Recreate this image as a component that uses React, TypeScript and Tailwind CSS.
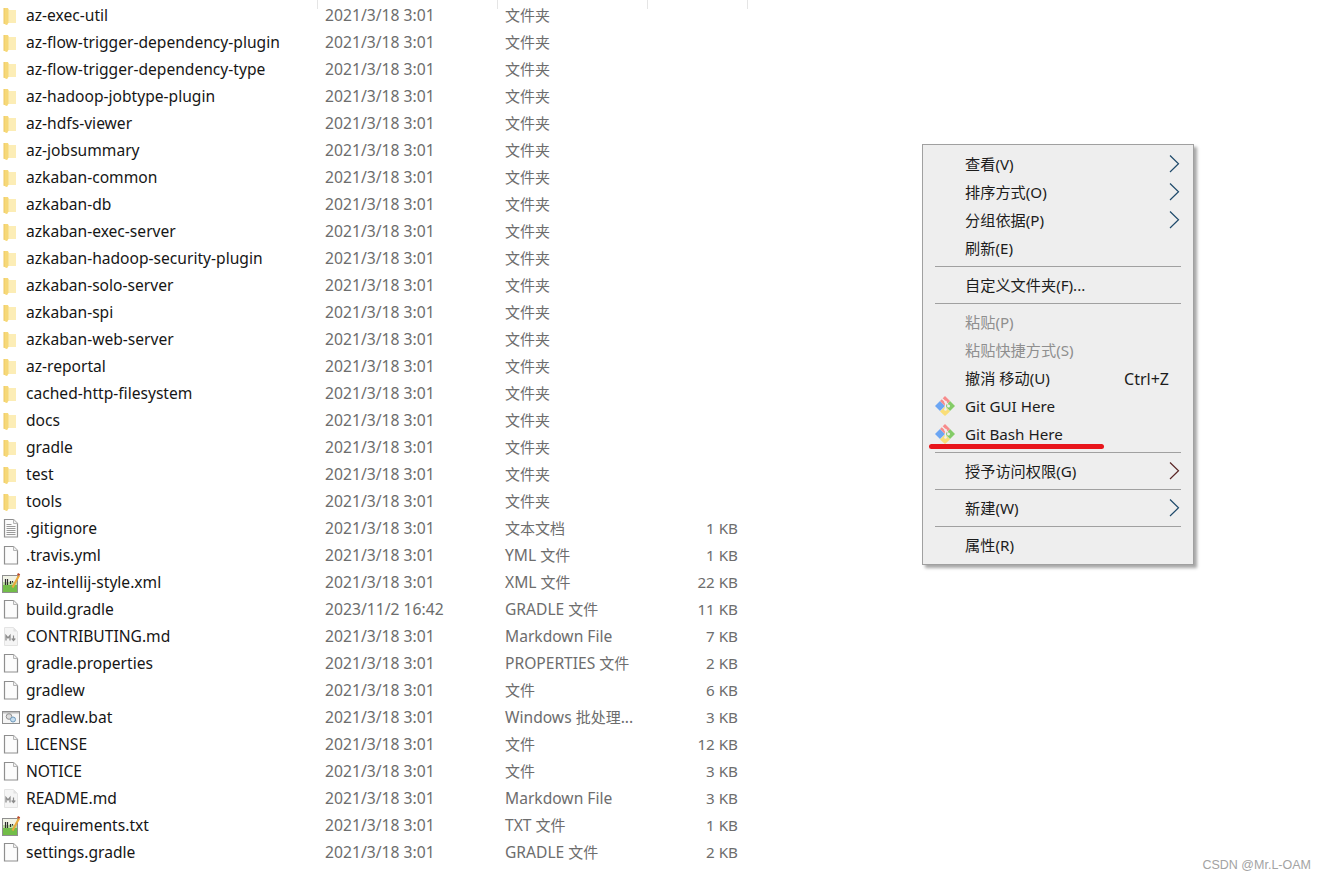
import React from 'react';

type Kind = 'folder' | 'text' | 'blank' | 'xml' | 'md' | 'bat';

type Row = { name: string; date?: string; type: string; size?: string; icon: Kind };

const folders = [
  'az-exec-util',
  'az-flow-trigger-dependency-plugin',
  'az-flow-trigger-dependency-type',
  'az-hadoop-jobtype-plugin',
  'az-hdfs-viewer',
  'az-jobsummary',
  'azkaban-common',
  'azkaban-db',
  'azkaban-exec-server',
  'azkaban-hadoop-security-plugin',
  'azkaban-solo-server',
  'azkaban-spi',
  'azkaban-web-server',
  'az-reportal',
  'cached-http-filesystem',
  'docs',
  'gradle',
  'test',
  'tools',
];

const rows: Row[] = [
  ...folders.map((name): Row => ({ name, type: '文件夹', icon: 'folder' })),
  { name: '.gitignore', type: '文本文档', size: '1 KB', icon: 'text' },
  { name: '.travis.yml', type: 'YML 文件', size: '1 KB', icon: 'blank' },
  { name: 'az-intellij-style.xml', type: 'XML 文件', size: '22 KB', icon: 'xml' },
  { name: 'build.gradle', date: '2023/11/2 16:42', type: 'GRADLE 文件', size: '11 KB', icon: 'blank' },
  { name: 'CONTRIBUTING.md', type: 'Markdown File', size: '7 KB', icon: 'md' },
  { name: 'gradle.properties', type: 'PROPERTIES 文件', size: '2 KB', icon: 'blank' },
  { name: 'gradlew', type: '文件', size: '6 KB', icon: 'blank' },
  { name: 'gradlew.bat', type: 'Windows 批处理...', size: '3 KB', icon: 'bat' },
  { name: 'LICENSE', type: '文件', size: '12 KB', icon: 'blank' },
  { name: 'NOTICE', type: '文件', size: '3 KB', icon: 'blank' },
  { name: 'README.md', type: 'Markdown File', size: '3 KB', icon: 'md' },
  { name: 'requirements.txt', type: 'TXT 文件', size: '1 KB', icon: 'xml' },
  { name: 'settings.gradle', type: 'GRADLE 文件', size: '2 KB', icon: 'blank' },
];

// Latin runs are a little bigger than the CJK ones in the original
const Mixed = ({ text, cjk }: { text: string; cjk: string }) => (
  <>
    {text.split(/([\u4e00-\u9fff]+)/).map((part, i) =>
      i % 2 === 1 ? (
        <span key={i} className={cjk}>
          {part}
        </span>
      ) : (
        part
      ),
    )}
  </>
);

const FileIcon = ({ kind }: { kind: Kind }) => {
  if (kind === 'folder') {
    return (
      <svg width="22" height="22" viewBox="0 0 22 22">
        <path d="M4 3h4l1 2h7v13H8.500L7 20l-3-1.200z" fill="#fbe9a6" />
        <path d="M9 5h7v13H9z" fill="#fcedb6" />
        <path d="M4 3h3.800l.5 1.500V17.500L7 20l-3-1.200z" fill="#f6d878" />
        <path d="M4 3v15.800" stroke="#eec860" strokeWidth="1" />
      </svg>
    );
  }
  if (kind === 'xml') {
    return (
      <svg width="22" height="22" viewBox="0 0 22 22">
        <rect x="2.500" y="3.500" width="15" height="17" fill="#f1f3e6" stroke="#8f8f8f" />
        <rect x="3" y="13" width="14" height="7" fill="#72bd48" />
        <rect x="3" y="10" width="14" height="3" fill="#bcdca0" />
        <path d="M5.500 7v6M7.500 7v6M10.500 9v3M12.500 9v1.500" stroke="#2d2d2d" strokeWidth="1.200" />
        <path d="M12.500 15.500L19 3.500" stroke="#e9a93c" strokeWidth="2.200" />
        <path d="M18 1l2.200 1.200-1 1.800-2.200-1.200z" fill="#b9492c" />
      </svg>
    );
  }
  if (kind === 'bat') {
    return (
      <svg width="22" height="22" viewBox="0 0 22 22">
        <rect x="2.500" y="4.500" width="17" height="12" fill="#f5f5f5" stroke="#8e8e8e" />
        <rect x="3" y="5" width="16" height="1.500" fill="#bdbdbd" />
        <circle cx="9" cy="9.500" r="2.800" fill="#dcdcdc" stroke="#8f8f8f" />
        <circle cx="13" cy="12.500" r="2.500" fill="#c4dcef" stroke="#6f9abb" />
      </svg>
    );
  }
  if (kind === 'md') {
    return (
      <svg width="22" height="22" viewBox="0 0 22 22">
        <path d="M4.500 1.500h9l4 4v14h-13z" fill="#f5f5f5" stroke="#e4e4e4" />
        <path d="M13.500 1.500v4h4z" fill="#e2e2e2" />
        <path d="M6 14.500v-5l2 2.500 2-2.500v5" fill="none" stroke="#8c8c8c" strokeWidth="1.300" />
        <path d="M13.500 9.500v5M11.700 12.500l1.800 2 1.800-2" fill="none" stroke="#8c8c8c" strokeWidth="1.200" />
      </svg>
    );
  }
  return (
    <svg width="22" height="22" viewBox="0 0 22 22">
      <path d="M4.500 1.500h9l4 4v13.500h-13z" fill="#fcfcfc" stroke="#8f8f8f" strokeWidth="1.200" />
      <path d="M13.500 1.500v4h4" fill="#f0f0f0" stroke="#b5b5b5" />
      {kind === 'text' && (
        <path d="M6.500 6.500h5M6.500 8.500h9M6.500 10.500h9M6.500 12.500h9M6.500 14.500h9M6.500 16.500h9" stroke="#9a9a9a" strokeWidth="1" />
      )}
    </svg>
  );
};

const GitIcon = () => (
  <svg width="20" height="20" viewBox="0 0 20 20" className="block">
    <path d="M5 5l5 5-5 5-5-5z" fill="#6ca6f3" />
    <path d="M15 5l5 5-5 5-5-5z" fill="#84cc67" />
    <path d="M10 10.500l5 5-5 4.500-5-4.500z" fill="#f9de78" />
    <path d="M10 0l5 5-5 5-5-5z" fill="#f78b8b" />
    <path d="M7 2.500l6 6M10.500 6v8" stroke="#efefef" strokeWidth="1.300" />
    <circle cx="10.500" cy="6" r="1.300" fill="#efefef" />
    <circle cx="13.500" cy="10" r="1.500" fill="#efefef" />
    <circle cx="10.500" cy="13.500" r="1.300" fill="#efefef" />
  </svg>
);

const Chevron = ({ dark }: { dark?: boolean }) => (
  <svg width="12" height="18" viewBox="0 0 12 18" className="absolute left-[246px] top-[5px]">
    <path d="M1 0.500L9.500 8.800 1 17" fill="none" stroke={dark ? '#5a2626' : '#1f4a6b'} strokeWidth="1.200" />
  </svg>
);

const Sep = () => <div className="h-px bg-[#a0a0a0] mx-[12px] my-[4px]" />;

const Item = ({
  children,
  disabled,
  arrow,
  shortcut,
  git,
  underline,
}: {
  children: React.ReactNode;
  disabled?: boolean;
  arrow?: 'blue' | 'dark';
  shortcut?: string;
  git?: boolean;
  underline?: boolean;
}) => (
  <div className={`relative h-[28px] pl-[42px] flex items-center ${disabled ? 'text-[#8f8f8f]' : 'text-[#1c1c1c]'}`}>
    {git && (
      <span className="absolute left-[12px] top-[4px]">
        <GitIcon />
      </span>
    )}
    <span className="pt-[2px]">{children}</span>
    {shortcut && <span className="absolute right-[24px] pt-[2px] text-[16px]">{shortcut}</span>}
    {arrow && <Chevron dark={arrow === 'dark'} />}
    {underline && <div className="absolute left-[6px] top-[24px] h-[5px] w-[175px] rounded-full bg-[#e8151b]" />}
  </div>
);

export default function App() {
  return (
    <div className="relative w-[1326px] h-[880px] overflow-hidden bg-white font-['Noto_Sans','Noto_Sans_CJK_SC',sans-serif]">
      {/* column header stubs */}
      <div className="flex h-[9px] -mb-[9px]">
        <div className="w-[318px] h-full border-r border-[#e5e5e5]" />
        <div className="w-[180px] h-full border-r border-[#e5e5e5]" />
        <div className="w-[150px] h-full border-r border-[#e5e5e5]" />
        <div className="w-[100px] h-full border-r border-[#e5e5e5]" />
      </div>

      <div className="pt-[2px]">
        {rows.map((r) => (
          <div key={r.name} className="flex items-center h-[27px] leading-none">
            <div className="w-[26px] h-[22px] shrink-0">
              <FileIcon kind={r.icon} />
            </div>
            <div className="w-[299px] text-[15.6px] text-[#161616] whitespace-nowrap">{r.name}</div>
            <div className="w-[180px] text-[15.7px] text-[#6d6d6d] whitespace-nowrap">{r.date ?? '2021/3/18 3:01'}</div>
            <div className="w-[150px] text-[15.6px] text-[#6d6d6d] whitespace-nowrap">
              <Mixed text={r.type} cjk="text-[15px]" />
            </div>
            <div className="w-[83px] text-right text-[15.2px] text-[#6d6d6d] whitespace-nowrap">{r.size}</div>
          </div>
        ))}
      </div>

      {/* context menu */}
      <div className="absolute left-[922px] top-[144px] w-[272px] h-[421px] border border-[#a0a0a0] bg-[#eeeeee] pt-[5px] text-[15.2px] leading-none shadow-[3px_3px_3px_rgba(0,0,0,0.35)]">
        <Item arrow="blue">查看(V)</Item>
        <Item arrow="blue">排序方式(O)</Item>
        <Item arrow="blue">分组依据(P)</Item>
        <Item>刷新(E)</Item>
        <Sep />
        <Item>自定义文件夹(F)...</Item>
        <Sep />
        <Item disabled>粘贴(P)</Item>
        <Item disabled>粘贴快捷方式(S)</Item>
        <Item shortcut="Ctrl+Z">撤消 移动(U)</Item>
        <Item git>Git GUI Here</Item>
        <Item git underline>Git Bash Here</Item>
        <Sep />
        <Item arrow="dark">授予访问权限(G)</Item>
        <Sep />
        <Item arrow="blue">新建(W)</Item>
        <Sep />
        <Item>属性(R)</Item>
      </div>

      <div className="absolute right-[15px] top-[859px] text-[12.5px] leading-none text-[#a3a3a3] font-['Liberation_Sans',sans-serif]">
        CSDN @Mr.L-OAM
      </div>
    </div>
  );
}
